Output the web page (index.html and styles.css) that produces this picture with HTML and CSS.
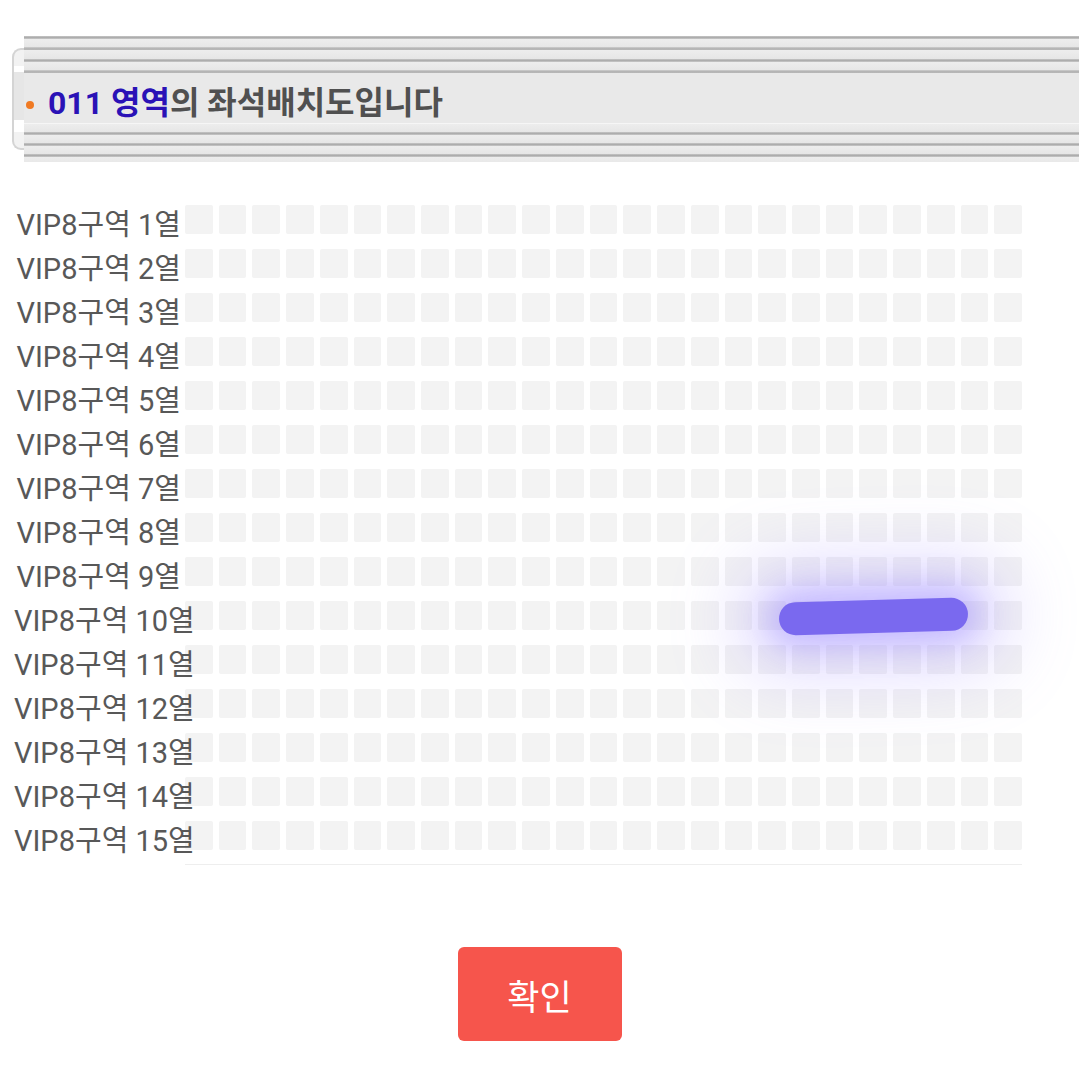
FILE: index.html
```html
<!DOCTYPE html>
<html lang="ko">
<head>
    <meta charset="UTF-8">
    <meta name="viewport" content="width=device-width, initial-scale=1.0">
    <title>좌석배치도</title>
    <link rel="stylesheet" href="styles.css">
</head>
<body>
    <div class="zone-head">
        <div class="head-cap"></div>
        <div class="head-bar">
            <div class="stripes-top"></div>
            <div class="head-title"><span class="dot"></span><span class="zone">011 영역</span>의 좌석배치도입니다</div>
            <div class="stripes-bottom"></div>
        </div>
    </div>

    <div class="seat-map" id="seat-map">
        <div class="swipe-mark"></div>
    </div>
    <div class="map-base"></div>

    <div class="confirm-wrap">
        <button class="btn-confirm">확인</button>
    </div>

    <script>
        // build rows of seats
        const map = document.getElementById('seat-map');
        const ROWS = 15, COLS = 25;
        for (let r = 1; r <= ROWS; r++) {
            const row = document.createElement('div');
            row.className = 'seat-row';
            let seats = '';
            for (let c = 0; c < COLS; c++) seats += '<div class="seat"></div>';
            row.innerHTML = `<div class="row-label">VIP8구역 ${r}열</div><div class="seats">${seats}</div>`;
            map.appendChild(row);
        }
    </script>
</body>
</html>
```

FILE: styles.css
```css
body {
    margin: 0;
    background: #fff;
    font-family: Roboto, "Noto Sans CJK KR", sans-serif;
}

/* header banner */
.zone-head { display: flex; align-items: center; margin-top: 35px; height: 127px; }
.head-cap {
    width: 10px; height: 98px; margin-left: 12px;
    border: 2px solid #d4d4d4; border-right: none;
    border-radius: 9px 0 0 9px;
    background: linear-gradient(#f2f2f2 0 16px, #fff 16px 22px, #e6e6e6 22px 70px, #fff 70px 82px, #f2f2f2 82px);
}
.head-bar { flex: 1; display: flex; flex-direction: column; }
.stripes-top {
    height: 37px;
    background: repeating-linear-gradient(#c6c6c6 0, #adadad 1.5px, #c9c9c9 3px, #ededed 3px, #e6e6e6 11.5px);
}
.head-title {
    height: 51px; box-sizing: border-box;
    padding: 12px 0 0 2px;
    line-height: 36px;
    background: #e9e9e9;
    border-bottom: 1px solid #f6f6f6;
    font-size: 32px; font-weight: 700; color: #505050;
    white-space: nowrap;
}
.head-title .dot {
    display: inline-block; width: 8px; height: 8px;
    margin-right: 14px; vertical-align: middle;
    background: #f07a23; border-radius: 50%;
}
.head-title .zone { color: #2a12b6; }
.stripes-bottom {
    height: 38px;
    background: repeating-linear-gradient(#ededed 0, #e6e6e6 8px, #c6c6c6 8px, #adadad 9.5px, #c9c9c9 11px);
}

/* seat map */
.seat-map { position: relative; margin-top: 35px; }
.seat-row { display: flex; height: 44px; padding-left: 14px; }
.row-label {
    position: relative; z-index: 1;
    width: 179px; height: 44px; margin-right: -8px;
    padding: 9px 12px 0 0; box-sizing: border-box;
    white-space: nowrap;
    text-align: right; line-height: 38px;
    font-size: 29px; color: #585858;
}
.seats {
    display: grid; grid-template-columns: repeat(25, 1fr);
    column-gap: 6px; width: 837px; height: 29px; margin-top: 7.5px;
}
.seat { background: #f3f3f3; border-radius: 2px; }
.map-base { margin: 7px 0 0 185px; width: 837px; border-top: 1px solid #eeeeee; }

.swipe-mark {
    position: absolute; z-index: 2;
    left: 779px; top: 403px; width: 189px; height: 33px;
    border-radius: 17px; background: #7a69ef;
    transform: rotate(-1.6deg);
    box-shadow: 0 0 30px 12px rgba(140, 120, 255, 0.35), 0 0 70px 40px rgba(160, 140, 255, 0.3);
}

/* confirm button */
.confirm-wrap { display: flex; justify-content: center; margin-top: 82px; }
.btn-confirm {
    width: 164px; height: 94px;
    border: none; border-radius: 6px;
    background: #f6554c; color: #fff;
    font-family: Roboto, "Noto Sans CJK KR", sans-serif;
    font-size: 35px;
}
```
